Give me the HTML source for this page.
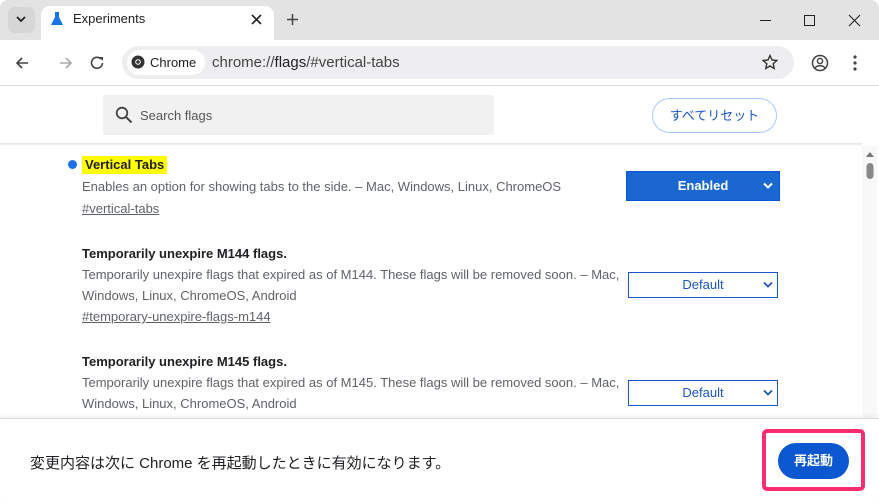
<!DOCTYPE html>
<html><head><meta charset="utf-8"><style>
*{box-sizing:border-box;margin:0;padding:0}
body{width:879px;height:504px;overflow:hidden;font-family:"Liberation Sans","Noto Sans CJK JP",sans-serif;background:#fff;position:relative;color:#202124}
.abs{position:absolute}
.titlebar{left:0;top:0;width:879px;height:40px;background:#e3e3e3;border-radius:8px 8px 0 0}
.tab{left:41px;top:6px;width:233px;height:36px;background:#fff;border-radius:9px 9px 0 0}
.toolbar{left:0;top:40px;width:879px;height:46px;background:#fff;border-bottom:1px solid #dadce0}
.omni{left:122px;top:46px;width:672px;height:33px;background:#eeeef0;border-radius:17px}
.chip{left:127px;top:50px;width:78px;height:25px;background:#fff;border-radius:13px}
.muted{color:#5f6368}
.desc{font-size:13px;color:#5f6368;line-height:21px}
.title{font-size:13px;font-weight:bold;color:#202124}
.link{font-size:13px;color:#5f6368;text-decoration:underline}
.sel{border:1px solid #1a56c6;font-size:13px;color:#1a56c6;text-align:center;line-height:23px;background:#fff}
</style></head><body>
<div class="abs titlebar"></div>
<div class="abs" style="left:8px;top:7px;width:27px;height:26px;background:#d6d6d6;border-radius:7px"></div>
<svg class="abs" style="left:15px;top:14px" width="12" height="10"><path d="M2 3l4 4 4-4" stroke="#202124" stroke-width="1.8" fill="none"/></svg>
<div class="abs tab"></div>
<svg class="abs" style="left:50px;top:11px" width="14" height="16"><path d="M5 1h4v5l4 8H1l4-8z" fill="#1a73e8"/></svg>
<div class="abs" style="left:73px;top:11px;font-size:13px">Experiments</div>
<svg class="abs" style="left:251px;top:14px" width="11" height="11"><path d="M1 1l9 9M10 1l-9 9" stroke="#202124" stroke-width="1.6"/></svg>
<svg class="abs" style="left:286px;top:13px" width="13" height="13"><path d="M6.5 1v11M1 6.5h11" stroke="#444" stroke-width="1.5"/></svg>
<svg class="abs" style="left:760px;top:14px" width="110" height="14"><path d="M0 6.5h11" stroke="#222" stroke-width="1"/><rect x="44.5" y="1.5" width="10" height="10" fill="none" stroke="#222"/><path d="M89 1l11 11M100 1l-11 11" stroke="#222" stroke-width="1.1"/></svg>
<div class="abs toolbar"></div>
<svg class="abs" style="left:14px;top:55px" width="100" height="16"><path d="M14 8H3M8 3L3 8l5 5" stroke="#444" stroke-width="1.6" fill="none"/><path d="M46 8h11M52 3l5 5-5 5" stroke="#aaa" stroke-width="1.6" fill="none"/><path d="M87 4a5.5 5.5 0 1 0 1.5 4" stroke="#444" stroke-width="1.6" fill="none"/><path d="M85 2h4v4z" fill="#444"/></svg>
<div class="abs omni"></div>
<div class="abs chip"></div>
<svg class="abs" style="left:131px;top:55px" width="14" height="14"><circle cx="7" cy="7" r="6.5" fill="#333"/><circle cx="7" cy="7" r="2.8" fill="#fff"/><circle cx="7" cy="7" r="1.8" fill="#333"/></svg>
<div class="abs" style="left:150px;top:55px;font-size:13px">Chrome</div>
<div class="abs" style="left:212px;top:54px;font-size:15px;color:#444">chrome://<span style="color:#202124">flags</span>/#vertical-tabs</div>
<svg class="abs" style="left:762px;top:54px" width="16" height="16"><path d="M8 1.5l2 4.5 4.8.5-3.6 3.2 1 4.8L8 12l-4.2 2.5 1-4.8L1.2 6.5 6 6z" fill="none" stroke="#333" stroke-width="1.4"/></svg>
<svg class="abs" style="left:811px;top:54px" width="18" height="18"><circle cx="9" cy="9" r="7.5" fill="none" stroke="#444" stroke-width="1.5"/><circle cx="9" cy="7" r="2.6" fill="none" stroke="#444" stroke-width="1.5"/><path d="M4 14c2-3 8-3 10 0" fill="none" stroke="#444" stroke-width="1.5"/></svg>
<svg class="abs" style="left:852px;top:55px" width="6" height="16"><circle cx="3" cy="2" r="1.6" fill="#444"/><circle cx="3" cy="8" r="1.6" fill="#444"/><circle cx="3" cy="14" r="1.6" fill="#444"/></svg>
<div class="abs" style="left:103px;top:95px;width:391px;height:40px;background:#f1f1f1;border-radius:2px"></div>
<svg class="abs" style="left:115px;top:106px" width="18" height="18"><circle cx="7" cy="7" r="5.3" fill="none" stroke="#444" stroke-width="1.8"/><path d="M11 11l5.5 5.5" stroke="#444" stroke-width="2"/></svg>
<div class="abs muted" style="left:140px;top:108px;font-size:13px;color:#555">Search flags</div>
<div class="abs" style="left:652px;top:98px;width:125px;height:35px;border:1px solid #a8c7fa;border-radius:18px;color:#1a56c6;font-size:13px;text-align:center;line-height:33px">すべてリセット</div>
<div class="abs" style="left:0;top:143px;width:862px;height:3px;background:linear-gradient(#e2e2e2,#fff)"></div>
<div class="abs" style="left:862px;top:146px;width:15px;height:272px;background:#f8f8f8"></div>
<svg class="abs" style="left:864px;top:148px" width="12" height="32"><path d="M2 9l4-5 4 5z" fill="#777"/><rect x="2.5" y="15" width="7" height="16" rx="3.5" fill="#888"/></svg>
<div class="abs" style="left:68px;top:160px;width:9px;height:9px;border-radius:50%;background:#1a73e8"></div>
<div class="abs title" style="left:82px;top:156px;background:#ffff00;padding:1px 3px 2px 3px">Vertical Tabs</div>
<div class="abs desc" style="left:82px;top:176px">Enables an option for showing tabs to the side. – Mac, Windows, Linux, ChromeOS</div>
<div class="abs link" style="left:82px;top:201px">#vertical-tabs</div>
<div class="abs" style="left:626px;top:171px;width:154px;height:30px;background:#1a67d2;border:1px solid #0b57d0;color:#fff;font-size:13px;font-weight:bold;text-align:center;line-height:28px">Enabled</div>
<svg class="abs" style="left:763px;top:182px" width="10" height="8"><path d="M1 1.5l4 4 4-4" stroke="#fff" stroke-width="2" fill="none"/></svg>
<div class="abs title" style="left:82px;top:246px">Temporarily unexpire M144 flags.</div>
<div class="abs desc" style="left:82px;top:264px">Temporarily unexpire flags that expired as of M144. These flags will be removed soon. – Mac,<br>Windows, Linux, ChromeOS, Android</div>
<div class="abs link" style="left:82px;top:309px">#temporary-unexpire-flags-m144</div>
<div class="abs sel" style="left:628px;top:272px;width:150px;height:26px">Default</div>
<svg class="abs" style="left:763px;top:281px" width="10" height="8"><path d="M1 1.5l4 4 4-4" stroke="#1a56c6" stroke-width="1.8" fill="none"/></svg>
<div class="abs title" style="left:82px;top:354px">Temporarily unexpire M145 flags.</div>
<div class="abs desc" style="left:82px;top:372px">Temporarily unexpire flags that expired as of M145. These flags will be removed soon. – Mac,<br>Windows, Linux, ChromeOS, Android</div>
<div class="abs sel" style="left:628px;top:380px;width:150px;height:26px">Default</div>
<svg class="abs" style="left:763px;top:389px" width="10" height="8"><path d="M1 1.5l4 4 4-4" stroke="#1a56c6" stroke-width="1.8" fill="none"/></svg>
<div class="abs" style="left:0;top:418px;width:879px;height:86px;background:#fff;border-top:1px solid #ddd;box-shadow:0 -2px 4px rgba(0,0,0,0.06);border-radius:0 0 6px 6px"></div>
<div class="abs" style="left:30px;top:452px;font-size:15px;color:#202124">変更内容は次に Chrome を再起動したときに有効になります。</div>
<div class="abs" style="left:762px;top:429px;width:103px;height:62px;border:4px solid #ff2d6f;border-radius:5px"></div>
<div class="abs" style="left:778px;top:443px;width:71px;height:36px;background:#0b57d0;border-radius:18px;color:#fff;font-size:13px;font-weight:bold;text-align:center;line-height:36px">再起動</div>
</body></html>
